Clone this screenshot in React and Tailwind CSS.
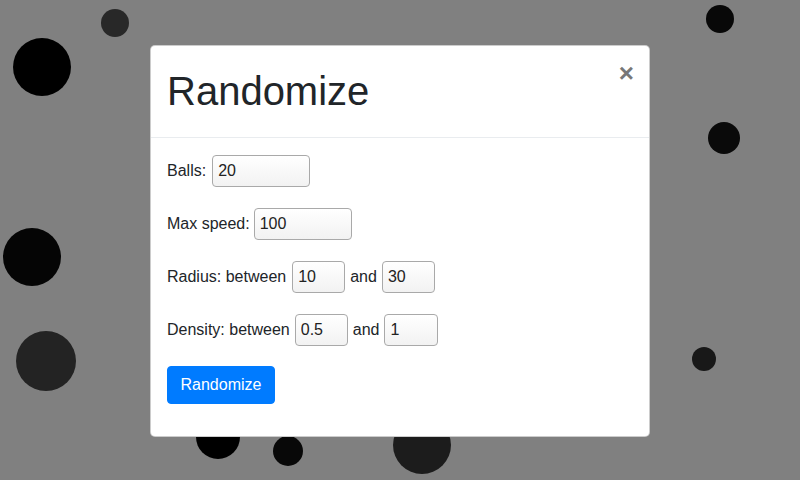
import React from "react";

const balls = [
  { x: 115, y: 23, r: 14, c: "bg-[#282828]" },
  { x: 42, y: 67, r: 29, c: "bg-[#000000]" },
  { x: 720, y: 19, r: 14, c: "bg-[#080808]" },
  { x: 724, y: 138, r: 16, c: "bg-[#0a0a0a]" },
  { x: 32, y: 257, r: 29, c: "bg-[#050505]" },
  { x: 46, y: 361, r: 30, c: "bg-[#232323]" },
  { x: 704, y: 359, r: 12, c: "bg-[#181818]" },
  { x: 218, y: 437, r: 22, c: "bg-[#000000]" },
  { x: 288, y: 451, r: 15, c: "bg-[#080808]" },
  { x: 422, y: 445, r: 29, c: "bg-[#1c1c1c]" },
];

const Field = ({ value, width }) => (
  <input
    type="text"
    defaultValue={value}
    style={{ width }}
    className="h-8 px-[5px] border border-[#a9a9a9] rounded-[4px] bg-gradient-to-b from-white to-[#f2f2f2] text-[16px] text-[#222] outline-none"
  />
);

const App = () => {
  return (
    <div
      className="relative w-[800px] h-[480px] overflow-hidden bg-[#808080] flex justify-center items-start pt-[45px]"
      style={{ fontFamily: '"Liberation Sans", Arial, sans-serif' }}
    >
      {/* balls on the canvas */}
      {balls.map((b, i) => (
        <div
          key={i}
          className={`absolute rounded-full ${b.c}`}
          style={{ left: b.x - b.r, top: b.y - b.r, width: b.r * 2, height: b.r * 2 }}
        />
      ))}

      {/* modal */}
      <div className="relative z-10 w-[500px] bg-white border border-black/20 rounded-[5px] text-[#212529] text-[16px]">
        <div className="flex items-start justify-between px-4 pt-[21px] pb-[22px] border-b border-[#e9ecef]">
          <h1 className="text-[40px] leading-[48px] font-normal">Randomize</h1>
          <button className="text-[26px] leading-none font-bold text-[#777] mt-[-7px] mr-[-1px]">×</button>
        </div>

        <div className="px-4 pt-4 pb-4">
          <div className="flex items-center h-[34px] mb-[19px]">
            <span>Balls:</span>
            <span className="w-[6px]" />
            <Field value="20" width={98} />
          </div>
          <div className="flex items-center h-[34px] mb-[19px]">
            <span>Max speed:</span>
            <span className="w-[4px]" />
            <Field value="100" width={98} />
          </div>
          <div className="flex items-center h-[34px] mb-[19px]">
            <span>Radius: between</span>
            <span className="w-[6px]" />
            <Field value="10" width={53} />
            <span className="ml-[5px] mr-[5px]">and</span>
            <Field value="30" width={53} />
          </div>
          <div className="flex items-center h-[34px] mb-[19px]">
            <span>Density: between</span>
            <span className="w-[5px]" />
            <Field value="0.5" width={53} />
            <span className="ml-[5px] mr-[5px]">and</span>
            <Field value="1" width={54} />
          </div>
          <div className="flex mb-4">
            <button className="h-[38px] px-[12.5px] bg-[#007bff] text-white rounded-[4px] border border-[#007bff]">
              Randomize
            </button>
          </div>
        </div>
      </div>
    </div>
  );
};

export default App;
